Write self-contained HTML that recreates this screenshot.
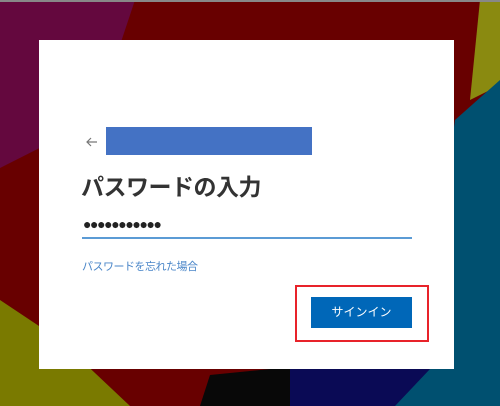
<!DOCTYPE html>
<html><head><meta charset="utf-8"><style>
body{margin:0;width:500px;height:406px;overflow:hidden;position:relative;font-family:"Liberation Sans","Noto Sans CJK JP",sans-serif;}
svg.bg{position:absolute;left:0;top:0}
.card{position:absolute;left:39px;top:40px;width:415px;height:329px;background:#fff;}
.a{position:absolute;}
</style></head><body>
<svg class="bg" width="500" height="406">
<rect width="500" height="406" fill="#680000"/>
<polygon points="0,0 135,0 95,120 0,168" fill="#64083e"/>
<polygon points="0,300 60,340 130,406 0,406" fill="#7a7a00"/>
<polygon points="480,0 500,0 500,85 470,100" fill="#8a8a10"/>
<polygon points="455,120 500,80 500,406 390,406 430,300" fill="#005070"/>
<polygon points="200,406 210,375 270,369 300,369 300,406" fill="#080808"/>
<polygon points="290,369 430,369 395,406 290,406" fill="#0a0a55"/>
<rect x="0" y="0" width="500" height="2" fill="#888"/>
</svg>
<div class="card"></div>
<svg class="a" style="left:85px;top:136px" width="14" height="12"><path d="M12 6H2M6 2L2 6L6 10" stroke="#777" stroke-width="1.2" fill="none"/></svg>
<div class="a" style="left:106px;top:127px;width:206px;height:28px;background:#4472c4"></div>
<div class="a" style="left:81px;top:168px;font-size:23px;font-weight:bold;color:#333;letter-spacing:-0.5px">パスワードの入力</div>
<div class="a" style="left:83px;top:216px;font-size:14px;color:#222;letter-spacing:-1.4px">●●●●●●●●●●●</div>
<div class="a" style="left:82px;top:237px;width:330px;height:2px;background:#5b9bd5"></div>
<div class="a" style="left:82px;top:258px;font-size:11px;color:#4a86c8;letter-spacing:-0.5px">パスワードを忘れた場合</div>
<div class="a" style="left:295px;top:285px;width:130px;height:53px;border:2px solid #e8232a"></div>
<div class="a" style="left:311px;top:297px;width:101px;height:31px;background:#0067b8;color:#fff;font-size:12px;text-align:center;line-height:31px">サインイン</div>
</body></html>
